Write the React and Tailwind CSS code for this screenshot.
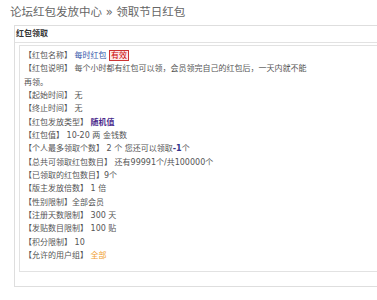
import React from 'react';

const Row = ({ label, children, tight }) => (
  <div>
    【{label}】{tight ? '' : ' '}{children}
  </div>
);

const App = () => {
  return (
    <div className="w-[377px] h-[300px] bg-white overflow-hidden font-['DejaVu_Sans','Noto_Sans_CJK_SC',sans-serif]">
      <div className="h-[25px] pl-[10px] flex items-center text-[11.5px] text-[#666] leading-none">
        论坛红包发放中心 » 领取节日红包
      </div>

      <div className="ml-[14px] h-[262px] border border-r-0 border-[#dedede]">
        <div className="h-[17px] pl-[1px] flex items-center border-b border-[#e2e2e2] text-[8px] font-bold text-[#333]">
          红包领取
        </div>

        {/* Details box */}
        <div className="mt-[2px] ml-[4px] border border-r-0 border-[#e2e2e2] pl-[4px] pt-[3px] pb-[9px] text-[8px] leading-[13.33px] text-[#555]">
          <Row label="红包名称">
            <span className="text-[#3355aa]">每时红包</span>{' '}
            <span className="text-[#cc0000] bg-[#fde8e8] border border-[#cc3333] px-[1px] leading-none">有效</span>
          </Row>
          <div className="w-[287px]">
            【红包说明】 每个小时都有红包可以领，会员领完自己的红包后，一天内就不能再领。
          </div>
          <Row label="起始时间">无</Row>
          <Row label="终止时间">无</Row>
          <Row label="红包发放类型">
            <span className="text-[#4b2a8c] font-bold">随机值</span>
          </Row>
          <Row label="红包值">10-20 两 金钱数</Row>
          <Row label="个人最多领取个数">
            2 个 您还可以领取<span className="text-[#33338a] font-bold">-1</span>个
          </Row>
          <Row label="总共可领取红包数目">还有99991个/共100000个</Row>
          <Row label="已领取的红包数目" tight>9个</Row>
          <Row label="版主发放倍数">1 倍</Row>
          <Row label="性别限制" tight>全部会员</Row>
          <Row label="注册天数限制">300 天</Row>
          <Row label="发贴数目限制">100 贴</Row>
          <Row label="积分限制">10</Row>
          <Row label="允许的用户组">
            <span className="text-[#f0a030]">全部</span>
          </Row>
        </div>
      </div>
    </div>
  );
};

export default App;
